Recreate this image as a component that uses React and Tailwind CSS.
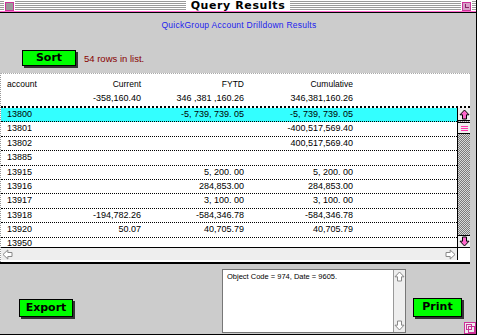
import React from "react";

const sans = "font-['Liberation_Sans',Arial,sans-serif]";

function Arrow({ dir = "up", fill = "#ff66cc", stroke = "#000", size = 11 }) {
  const rot = { up: 0, right: 90, down: 180, left: 270 }[dir];
  return (
    <svg width={size} height={size} viewBox="0 0 11 11" className="block">
      <g transform={`rotate(${rot} 5.5 5.5)`}>
        <path d="M5.5 1 L10 5.8 H7.5 V10 H3.5 V5.8 H1 Z" fill={fill} stroke={stroke} strokeWidth="1" strokeLinejoin="miter" />
      </g>
    </svg>
  );
}

function GreenButton({ label, className = "" }) {
  return (
    <div className={`flex items-center justify-center bg-[#00ff00] border border-black shadow-[2px_2px_0_#333] font-['DejaVu_Sans',sans-serif] font-bold text-[11px] text-black ${className}`}>
      {label}
    </div>
  );
}

const rows = [
  ["13800", "", "-5, 739, 739. 05", "-5, 739, 739. 05", true],
  ["13801", "", "", "-400,517,569.40"],
  ["13802", "", "", "400,517,569.40"],
  ["13885", "", "", ""],
  ["13915", "", "5, 200. 00", "5, 200. 00"],
  ["13916", "", "284,853.00", "284,853.00"],
  ["13917", "", "3, 100. 00", "3, 100. 00"],
  ["13918", "-194,782.26", "-584,346.78", "-584,346.78"],
  ["13920", "50.07", "40,705.79", "40,705.79"],
  ["13950", "", "", ""],
];

function Cells({ a, b, c, d, cls = "" }) {
  return (
    <div className={`flex items-center h-full ${cls}`}>
      <div className="w-[70px] pl-[6px]">{a}</div>
      <div className="w-[70px] text-right">{b}</div>
      <div className="w-[103px] text-right">{c}</div>
      <div className="w-[109px] text-right">{d}</div>
    </div>
  );
}

export default function App() {
  return (
    <div className={`w-[480px] h-[335px] bg-white overflow-hidden ${sans}`}>
      <div className="w-[477px] h-[335px] bg-[#cccccc] border-r border-b border-black flex flex-col">
        {/* Title bar */}
        <div className="h-[11px] bg-white flex items-center">
          <div className="flex-1 h-[10px] mt-[1px] bg-[repeating-linear-gradient(to_bottom,#9a9a9a_0px,#9a9a9a_1px,#ffffff_1px,#ffffff_2px)] flex items-center">
            <div className="ml-[4px] px-[1px] bg-white h-[10px] flex items-center">
              <div className="w-[9px] h-[9px] border border-[#cc3399] bg-[#9a9a9a]" />
            </div>
          </div>
          <div className="px-[5px] bg-white h-[11px] flex items-center font-['DejaVu_Sans',sans-serif] font-bold text-[11px] leading-none tracking-[0.6px] text-black">
            Query Results
          </div>
          <div className="flex-1 h-[10px] mt-[1px] bg-[repeating-linear-gradient(to_bottom,#9a9a9a_0px,#9a9a9a_1px,#ffffff_1px,#ffffff_2px)] flex items-center justify-end">
            <div className="mr-[4px] px-[1px] bg-white h-[10px] flex items-center">
              <div className="w-[9px] h-[9px] border border-[#cc3399] bg-[#d8a0c8] relative">
                <div className="absolute right-[1px] top-[1px] w-[4px] h-[4px] border-b border-l border-[#882266]" />
              </div>
            </div>
          </div>
        </div>
        <div className="h-[1px] bg-[#ff66cc]" />
        <div className="h-[1px] bg-black" />

        {/* Subtitle */}
        <div className="h-[24px] flex items-center justify-center pt-[1px]">
          <span className="text-[8.5px] text-[#2222ee] tracking-[0.25px] ml-[2px]">QuickGroup Account Drilldown Results</span>
        </div>

        {/* Sort row */}
        <div className="h-[36px] flex items-start pl-[22px] pt-[13px]">
          <GreenButton label="Sort" className="w-[54px] h-[16px]" />
          <span className="ml-[8px] mt-[2px] text-[9.5px] text-[#880000]">54 rows in list.</span>
        </div>

        {/* Table panel */}
        <div className="w-[470px] h-[189px] bg-white border-t border-dotted border-[#aaaaaa] border-l border-l-[#999] flex flex-col text-[9px] text-black">
          <div className="h-[34px] flex flex-col border-b-2 border-dotted border-black pt-[2px]">
            <div className="h-[16px]">
              <Cells a="account" b="Current" c="FYTD" d="Cumulative" cls="text-[8.5px]" />
            </div>
            <div className="h-[14px]">
              <Cells a="" b="-358,160.40" c="346 ,381 ,160.26" d="346,381,160.26" />
            </div>
          </div>
          <div className="flex h-[139px]">
            <div className="w-[456px] overflow-hidden">
              {rows.map(([a, b, c, d, sel]) => (
                <div key={a} className={`h-[14.4px] border-b border-dotted border-black ${sel ? "bg-[#33ffff]" : ""}`}>
                  <Cells a={a} b={b} c={c} d={d} />
                </div>
              ))}
            </div>
            <div className="w-[13px] border-l border-black flex flex-col bg-[repeating-conic-gradient(#7a7a7a_0_25%,#d8d8d8_0_50%)] bg-[length:2px_2px]">
              <div className="h-[13px] bg-[#eeeeee] border-b border-black flex items-center justify-center">
                <Arrow dir="up" />
              </div>
              <div className="h-[12px] mt-[1px] bg-[#eeeeee] border-y border-black flex flex-col items-center justify-center gap-[1px]">
                <div className="w-[7px] h-[1px] bg-[#ff33aa]" />
                <div className="w-[7px] h-[1px] bg-[#ff33aa]" />
                <div className="w-[7px] h-[1px] bg-[#ff33aa]" />
              </div>
              <div className="flex-1" />
              <div className="h-[12px] bg-[#eeeeee] border-t border-black flex items-center justify-center">
                <Arrow dir="down" />
              </div>
            </div>
          </div>
          {/* horizontal scrollbar */}
          <div className="h-[13px] border-t border-black flex">
            <div className="w-[456px] bg-[#eeeeee] flex items-center justify-between px-[1px]">
              <Arrow dir="left" fill="#ffffff" stroke="#888" />
              <Arrow dir="right" fill="#ffffff" stroke="#888" />
            </div>
            <div className="flex-1 border-l border-black bg-white" />
          </div>
        </div>
        <div className="w-[470px] h-[2px] bg-black" />

        {/* Bottom area */}
        <div className="flex-1 relative flex">
          <div className="w-[222px] flex items-start pl-[19px] pt-[35px]">
            <GreenButton label="Export" className="w-[54px] h-[18px]" />
          </div>
          <div className="mt-[5px] w-[184px] h-[64px] border border-[#777] bg-white flex">
            <div className="flex-1 px-[4px] pt-[3px] text-[7.5px] leading-none text-black">
              Object Code = 974, Date = 9605.
            </div>
            <div className="w-[12px] border-l border-[#999] bg-[#eeeeee] flex flex-col justify-between items-center py-[1px]">
              <Arrow dir="up" fill="#ffffff" stroke="#888" />
              <Arrow dir="down" fill="#ffffff" stroke="#888" />
            </div>
          </div>
          <div className="pl-[7px] pt-[34px]">
            <GreenButton label="Print" className="w-[49px] h-[19px]" />
          </div>
          <div className="absolute right-[0px] bottom-[0px] w-[12px] h-[12px] border border-[#cc3399] bg-[#eeeeee]">
            <div className="absolute left-[1px] top-[1px] w-[6px] h-[6px] border border-[#cc3399]" />
            <div className="absolute left-[3px] top-[3px] w-[7px] h-[7px] border border-[#cc3399]" />
          </div>
        </div>
      </div>
    </div>
  );
}
